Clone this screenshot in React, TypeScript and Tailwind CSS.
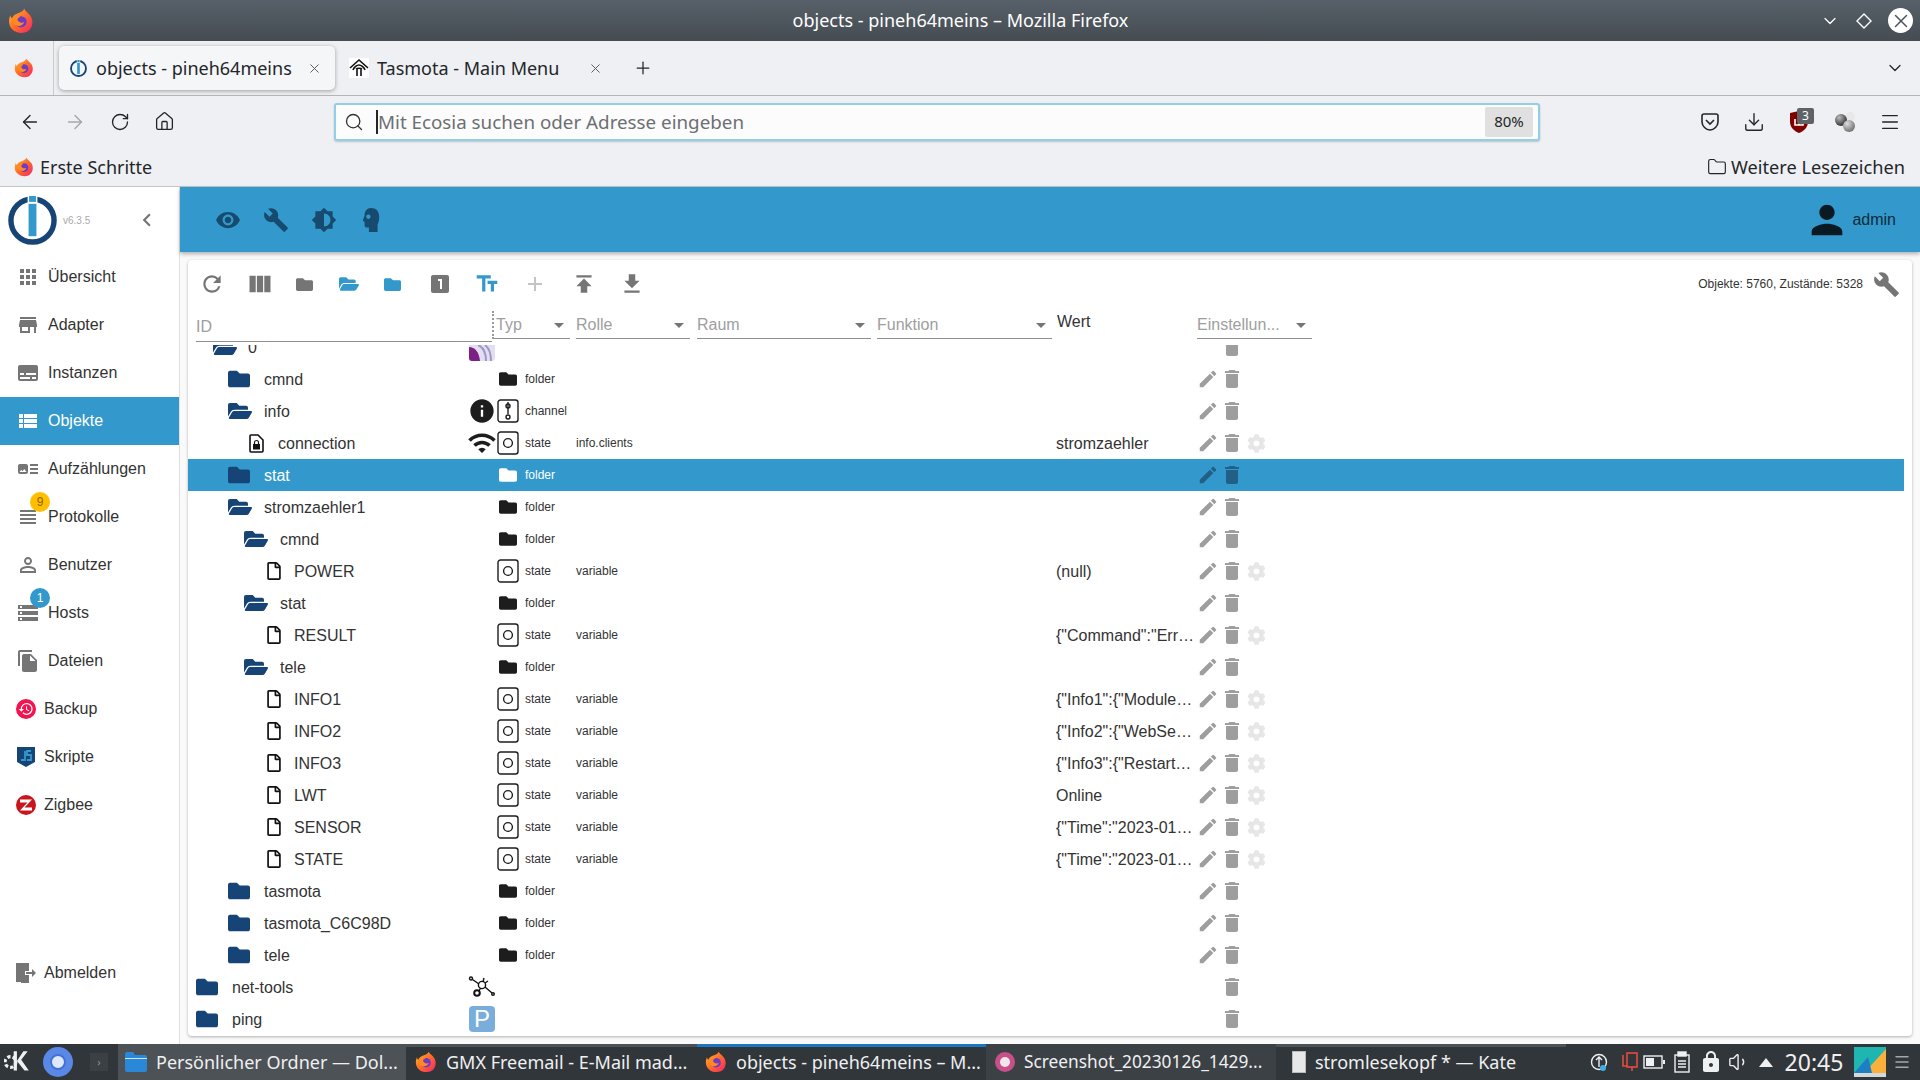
import type { ReactNode } from 'react'
import { FaFolder, FaFolderOpen, FaRegFile, FaCog } from 'react-icons/fa'
import {
  MdApps, MdStore, MdSubtitles, MdViewList, MdArtTrack, MdViewHeadline, MdPersonOutline, MdStorage, MdFileCopy,
  MdRestore, MdRefresh, MdViewColumn, MdLooksOne, MdTextFields, MdAdd, MdPublish, MdGetApp, MdVisibility, MdBuild,
  MdBrightness6, MdPerson, MdEdit, MdDelete, MdChevronLeft, MdArrowDropDown, MdInfo, MdWifi, MdLock,
} from 'react-icons/md'
import {
  ArrowLeft, ArrowRight, RotateCw, Home, Search, X, Plus, ChevronDown, Menu, Download, Folder, Volume1,
} from 'lucide-react'

function Firefox({ size = 24 }: { size?: number }) {
  return (
    <svg width={size} height={size} viewBox="0 0 32 32" className="shrink-0">
      <defs>
        <linearGradient id="ffa" x1="0" y1="0" x2="1" y2="1">
          <stop offset="0" stopColor="#ffbd2e" />
          <stop offset="0.5" stopColor="#ff6a2a" />
          <stop offset="1" stopColor="#f4246b" />
        </linearGradient>
      </defs>
      <path d="M20 1c1 3 5 5 8 9 4 7 2 15-4 19-6 3-14 2-19-3C1 22 0 15 3 9c0 2 1 3 2 4 1-3 3-5 6-6 3-1 7-2 9-6z" fill="url(#ffa)" />
      <circle cx="16" cy="17" r="7" fill="#6c3bc8" />
      <path d="M5 12c3-3 8-3 10-1-2 1-4 2-3 4 1 3 6 4 8 2-1 4-6 7-11 4-3-2-5-6-4-9z" fill="#ff8a1f" />
    </svg>
  )
}

function IoLogo({ size = 50 }: { size?: number }) {
  return (
    <svg width={size} height={size} viewBox="0 0 50 50" className="shrink-0">
      <circle cx="25" cy="25" r="22" fill="none" stroke="#164477" strokeWidth="5.5" />
      <rect x="20" y="0" width="10" height="8" fill="#fff" />
      <rect x="21.5" y="0" width="7" height="6" fill="#3399cc" />
      <rect x="21" y="8" width="8" height="33" fill="#3399cc" />
    </svg>
  )
}

function TasmotaIcon() {
  return (
    <svg width="20" height="20" viewBox="0 0 20 20" className="shrink-0 bg-white" fill="none" stroke="#111" strokeWidth="1.6">
      <path d="M1 10 10 2l9 8" />
      <path d="M4 12c1-3 4-5 6-5s5 2 6 5" />
      <path d="M8 18v-8M12 18v-8M7 11c1-1 5-1 6 0" />
    </svg>
  )
}

function UBlock() {
  return (
    <div className="relative w-[22px] h-[24px]">
      <svg width="18" height="22" viewBox="0 0 18 22" className="mt-[2px]">
        <path d="M9 0 18 2v9c0 5-4 9-9 11-5-2-9-6-9-11V2z" fill="#800000" />
        <path d="M5 8v6h8V8M9 8v6" fill="none" stroke="#fff" strokeWidth="1.6" />
      </svg>
      <span className="absolute -top-[3px] left-[7px] w-[17px] h-[16px] bg-[#5f6368] text-white text-[12px] leading-[16px] text-center rounded-[2px]">3</span>
    </div>
  )
}

function Spheres() {
  return (
    <svg width="22" height="22" viewBox="0 0 22 22">
      <defs>
        <radialGradient id="sph" cx="0.35" cy="0.3" r="0.8">
          <stop offset="0" stopColor="#bbb" />
          <stop offset="1" stopColor="#222" />
        </radialGradient>
        <radialGradient id="sph2" cx="0.35" cy="0.3" r="0.8">
          <stop offset="0" stopColor="#ddd" />
          <stop offset="1" stopColor="#666" />
        </radialGradient>
      </defs>
      <circle cx="16" cy="6" r="5" fill="#e8e8e8" />
      <circle cx="7" cy="9" r="6" fill="url(#sph)" />
      <circle cx="15" cy="15" r="6" fill="url(#sph2)" />
    </svg>
  )
}

function StateBox({ color, kind }: { color: string; kind: 'state' | 'channel' }) {
  return (
    <svg width="22" height="24" viewBox="0 0 22 24" fill="none" stroke={color} strokeWidth="1.4">
      <rect x="1" y="1" width="20" height="22" rx="2.5" />
      {kind === 'state' ? (
        <circle cx="11" cy="12" r="4.4" />
      ) : (
        <>
          <circle cx="11" cy="7" r="2" />
          <circle cx="11" cy="18" r="2" />
          <path d="M11 3v12" />
        </>
      )}
    </svg>
  )
}

function LockFile() {
  return (
    <svg width="15" height="19" viewBox="0 0 15 19">
      <path d="M1 2c0-.6.4-1 1-1h7l5 5v11c0 .6-.4 1-1 1H2c-.6 0-1-.4-1-1z" fill="none" stroke="#111" strokeWidth="1.6" />
      <rect x="4" y="10" width="7" height="5.500" fill="#111" />
      <path d="M5.500 10V8.500a2 2 0 0 1 4 0V10" fill="none" stroke="#111" strokeWidth="1.200" />
    </svg>
  )
}

function HeadIcon() {
  return (
    <svg width="26" height="26" viewBox="0 0 24 24" className="ml-[20px]">
      <path d="M13 1C9 1 7 4 7 8l-1.500 4c0 1 .8 1.500 1.500 1.500V17c0 1 1 2 2 2h2v4h8v-7c1-2 1.500-4 1.500-7 0-5-3-8-7.500-8z" fill="currentColor" />
      <circle cx="10.500" cy="9" r="2" fill="#3399cc" />
    </svg>
  )
}

function NetToolsIcon() {
  return (
    <svg width="28" height="24" viewBox="0 0 28 24" fill="none" stroke="#111" strokeWidth="1.4">
      <circle cx="9" cy="18" r="2.8" strokeWidth="2" />
      <circle cx="14" cy="10" r="3.6" />
      <circle cx="3" cy="3.5" r="1.5" />
      <circle cx="25" cy="19" r="1.3" />
      <path d="M4.5 4.5 11 9M11 16l1.6-3M17 12l7 6M15 7l1-4M17 8l3-2" />
    </svg>
  )
}

function PTile() {
  return (
    <div className="w-[26px] h-[26px] rounded-[4px] bg-[#79aedc] text-white text-[24px] leading-[26px] text-center">P</div>
  )
}

function ArcsIcon() {
  return (
    <svg width="26" height="28" viewBox="0 0 26 28" className="rounded-[3px]">
      <rect width="26" height="28" fill="#e4dff0" />
      <path d="M0 14c6 0 10 5 11 14H0z" fill="#7d1f85" />
      <path d="M9 12c5 2 8 8 8 16M16 12c4 3 6 9 6 16" stroke="#9f97c9" strokeWidth="2" fill="none" />
    </svg>
  )
}

type Row = {
  name: string
  indent: string
  kind: 'closed' | 'open' | 'file' | 'lock'
  aux?: ReactNode
  type?: 'folder' | 'channel' | 'state'
  role?: string
  value?: string
  selected?: boolean
}

const rows: Row[] = [
  { name: 'cmnd', indent: 'pl-[40px]', kind: 'closed', type: 'folder' },
  { name: 'info', indent: 'pl-[40px]', kind: 'open', type: 'channel', aux: <MdInfo size={28} className="text-[#1d1d1d]" /> },
  { name: 'connection', indent: 'pl-[56px]', kind: 'lock', type: 'state', role: 'info.clients', value: 'stromzaehler', aux: <MdWifi size={30} className="text-[#1d1d1d]" /> },
  { name: 'stat', indent: 'pl-[40px]', kind: 'closed', type: 'folder', selected: true },
  { name: 'stromzaehler1', indent: 'pl-[40px]', kind: 'open', type: 'folder' },
  { name: 'cmnd', indent: 'pl-[56px]', kind: 'open', type: 'folder' },
  { name: 'POWER', indent: 'pl-[72px]', kind: 'file', type: 'state', role: 'variable', value: '(null)' },
  { name: 'stat', indent: 'pl-[56px]', kind: 'open', type: 'folder' },
  { name: 'RESULT', indent: 'pl-[72px]', kind: 'file', type: 'state', role: 'variable', value: '{"Command":"Error"}' },
  { name: 'tele', indent: 'pl-[56px]', kind: 'open', type: 'folder' },
  { name: 'INFO1', indent: 'pl-[72px]', kind: 'file', type: 'state', role: 'variable', value: '{"Info1":{"Module":"Tasmota"}}' },
  { name: 'INFO2', indent: 'pl-[72px]', kind: 'file', type: 'state', role: 'variable', value: '{"Info2":{"WebServer":"2"}}' },
  { name: 'INFO3', indent: 'pl-[72px]', kind: 'file', type: 'state', role: 'variable', value: '{"Info3":{"RestartReason":""}}' },
  { name: 'LWT', indent: 'pl-[72px]', kind: 'file', type: 'state', role: 'variable', value: 'Online' },
  { name: 'SENSOR', indent: 'pl-[72px]', kind: 'file', type: 'state', role: 'variable', value: '{"Time":"2023-01-26T20:45"}' },
  { name: 'STATE', indent: 'pl-[72px]', kind: 'file', type: 'state', role: 'variable', value: '{"Time":"2023-01-26T20:45"}' },
  { name: 'tasmota', indent: 'pl-[40px]', kind: 'closed', type: 'folder' },
  { name: 'tasmota_C6C98D', indent: 'pl-[40px]', kind: 'closed', type: 'folder' },
  { name: 'tele', indent: 'pl-[40px]', kind: 'closed', type: 'folder' },
  { name: 'net-tools', indent: 'pl-[8px]', kind: 'closed', aux: <NetToolsIcon /> },
  { name: 'ping', indent: 'pl-[8px]', kind: 'closed', aux: <PTile /> },
]

function TreeRow({ row }: { row: Row }) {
  const s = row.selected
  const actionColor = s ? 'text-[#215f86]' : 'text-[#9e9e9e]'
  return (
    <div className={`flex items-center h-[32px] ${s ? 'bg-[#3399cc] text-white' : 'text-[#333]'}`}>
      <div className={`flex items-center w-[279px] shrink-0 ${row.indent}`}>
        {row.kind === 'closed' && <div className="w-[36px]"><FaFolder size={22} className="text-[#164477]" /></div>}
        {row.kind === 'open' && <div className="w-[36px]"><FaFolderOpen size={24} className="text-[#164477]" /></div>}
        {row.kind === 'file' && <div className="w-[34px] pl-[5px]"><FaRegFile size={18} className="text-[#111]" /></div>}
        {row.kind === 'lock' && <div className="w-[34px] pl-[5px]"><LockFile /></div>}
        <span className="text-[16px] mt-[2px]">{row.name}</span>
      </div>
      <div className="w-[30px] shrink-0 flex justify-center">{row.aux}</div>
      <div className="w-[22px] shrink-0 flex justify-center">
        {row.type === 'folder' && <FaFolder size={18} className={s ? 'text-white' : 'text-[#1d1d1d]'} />}
        {row.type === 'channel' && <StateBox color="#1d1d1d" kind="channel" />}
        {row.type === 'state' && <StateBox color="#1d1d1d" kind="state" />}
      </div>
      <div className="w-[57px] shrink-0 pl-[6px] text-[12px] leading-[14px]">{row.type}</div>
      <div className="w-[480px] shrink-0 text-[12px] leading-[14px]">{row.role}</div>
      <div className="w-[139px] shrink-0 text-[16px] mt-[2px] truncate">{row.value}</div>
      <div className="flex items-center">
        <div className="w-[25px] flex justify-center">
          {row.type && <MdEdit size={22} className={actionColor} />}
        </div>
        <div className="w-[24px] flex justify-center"><MdDelete size={24} className={actionColor} /></div>
        <div className="w-[24px] flex justify-center">
          {row.type === 'state' && <FaCog size={19} className="text-[#e6e6e6]" />}
        </div>
      </div>
    </div>
  )
}

function NavItem({ icon, label, active, left = 'pl-[48px]', badge }: { icon: ReactNode; label: string; active?: boolean; left?: string; badge?: ReactNode }) {
  return (
    <div className={`relative h-[48px] flex items-center text-[16px] ${active ? 'bg-[#3399cc] text-white' : 'text-[#333]'} ${left}`}>
      <div className={`absolute left-[14px] top-[10px] w-[28px] h-[28px] flex items-center justify-center ${active ? 'text-white' : 'text-[#757575]'}`}>{icon}</div>
      {badge}
      {label}
    </div>
  )
}

function Badge({ color, text, dark }: { color: string; text: string; dark?: boolean }) {
  return (
    <span className={`absolute left-[30px] top-[-1px] w-[20px] h-[20px] rounded-full text-[12px] leading-[20px] text-center ${color} ${dark ? 'text-[#8a6500]' : 'text-white'}`}>{text}</span>
  )
}

function FilterHead({ label, w, ml }: { label: string; w: string; ml: string }) {
  return (
    <div className={`h-[28px] flex items-center justify-between border-b border-[#8f8f8f] text-[#9e9e9e] text-[16px] ${w} ${ml}`}>
      <span className="truncate">{label}</span>
      <MdArrowDropDown size={24} className="text-[#757575] shrink-0 -mr-[1px]" />
    </div>
  )
}

function Tool({ children, w }: { children: ReactNode; w: string }) {
  return <div className={`flex items-center justify-center shrink-0 ${w}`}>{children}</div>
}

function Task({ icon, label, cls, top, size = 'text-[18px]' }: { icon: ReactNode; label: string; cls: string; top: string; size?: string }) {
  return (
    <div className={`relative h-full flex items-center gap-[9px] overflow-hidden whitespace-nowrap ${cls}`}>
      <span className={`absolute top-0 left-0 right-0 h-[3px] ${top}`} />
      {icon}
      <span className={`text-[#eff0f1] ${size}`}>{label}</span>
    </div>
  )
}

export default function App() {
  return (
    <div className="w-[1920px] h-[1080px] flex flex-col overflow-hidden bg-white font-['Noto_Sans',sans-serif]">
      {/* window title */}
      <div className="h-[41px] shrink-0 flex items-center bg-gradient-to-b from-[#576069] to-[#454c52] text-white pl-[8px] pr-[7px]">
        <div className="flex-1"><Firefox size={26} /></div>
        <div className="text-[18px]">objects - pineh64meins – Mozilla Firefox</div>
        <div className="flex-1 flex justify-end items-center gap-[15px]">
          <ChevronDown size={20} strokeWidth={1.5} />
          <svg width="18" height="18" viewBox="0 0 18 18" fill="none" stroke="#fff" strokeWidth="1.4"><path d="M9 2l7 7-7 7-7-7z" /></svg>
          <div className="w-[25px] h-[25px] rounded-full bg-white flex items-center justify-center text-[#4d555c]"><X size={22} strokeWidth={1.6} /></div>
        </div>
      </div>

      {/* tabs */}
      <div className="h-[55px] shrink-0 flex items-center bg-[#eff0f3] border-b border-[#b4b5b7] text-[#232629] text-[18px]">
        <div className="w-[54px] h-full flex items-center justify-center pr-[5px] border-r border-[#c9cacc]"><Firefox size={20} /></div>
        <div className="ml-[5px] w-[276px] h-[44px] rounded-[5px] bg-[#f5f6f8] shadow-[0_1px_4px_rgba(0,0,0,0.35)] flex items-center pl-[11px] pr-[13px]">
          <IoLogo size={17} />
          <span className="ml-[9px] flex-1">objects - pineh64meins</span>
          <X size={15} strokeWidth={1.5} className="text-[#555]" />
        </div>
        <div className="ml-[14px] w-[254px] flex items-center">
          <TasmotaIcon />
          <span className="ml-[8px] flex-1">Tasmota - Main Menu</span>
          <X size={15} strokeWidth={1.5} className="text-[#555]" />
        </div>
        <Plus size={20} strokeWidth={1.5} className="ml-[30px]" />
        <ChevronDown size={20} strokeWidth={1.5} className="ml-auto mr-[15px]" />
      </div>

      {/* url bar */}
      <div className="h-[51px] shrink-0 flex items-center bg-[#eff0f3] text-[#232629]">
        <ArrowLeft size={22} strokeWidth={1.5} className="ml-[19px]" />
        <ArrowRight size={22} strokeWidth={1.5} className="ml-[23px] text-[#a5a6a8]" />
        <RotateCw size={20} strokeWidth={1.6} className="ml-[24px]" />
        <Home size={21} strokeWidth={1.5} className="ml-[24px]" />
        <div className="ml-[159px] w-[1206px] h-[38px] rounded-[3px] bg-[#fcfcfc] border-2 border-[#93cee9] flex items-center pl-[8px] pr-[5px] shadow-[0_1px_2px_rgba(0,0,0,0.2)]">
          <Search size={20} strokeWidth={1.6} className="text-[#333]" />
          <span className="ml-[12px] w-[2px] h-[24px] bg-[#232629]" />
          <span className="text-[18.8px] mt-[1px] text-[#6d6f73]">Mit Ecosia suchen oder Adresse eingeben</span>
          <span className="ml-auto w-[48px] h-[30px] rounded-[2px] bg-[#e0e0e0] text-[15px] flex items-center justify-center">80%</span>
        </div>
        <div className="ml-[160px] flex items-center">
          <svg width="20" height="20" viewBox="0 0 20 20" fill="none" stroke="#232629" strokeWidth="1.6"><path d="M2 4c0-1 .7-2 2-2h12c1.300 0 2 1 2 2v6c0 4-4 8-8 8s-8-4-8-8z" /><path d="M6 8l4 4 4-4" /></svg>
          <Download size={22} strokeWidth={1.5} className="ml-[23px]" />
          <div className="ml-[25px]"><UBlock /></div>
          <div className="ml-[22px]"><Spheres /></div>
          <Menu size={22} strokeWidth={1.5} className="ml-[23px]" />
        </div>
      </div>

      {/* bookmarks */}
      <div className="h-[40px] shrink-0 flex items-center bg-[#eff0f3] border-b border-[#c2c3c5] pl-[14px] pr-[15px] text-[#232629] text-[18px]">
        <Firefox size={20} />
        <span className="ml-[6px] mt-[2px]">Erste Schritte</span>
        <Folder size={20} strokeWidth={1.4} className="ml-auto mr-[4px]" />
        <span className="mt-[2px] text-[18.2px]">Weitere Lesezeichen</span>
      </div>

      {/* ioBroker admin */}
      <div className="flex-1 min-h-0 flex font-['Liberation_Sans',sans-serif]">
        <aside className="w-[180px] shrink-0 border-r border-[#e0e0e0] flex flex-col">
          <div className="h-[66px] flex items-center pl-[8px] relative">
            <IoLogo size={49} />
            <span className="ml-[6px] text-[10px] text-[#aaa]">v6.3.5</span>
            <MdChevronLeft size={26} className="absolute left-[134px] top-[20px] text-[#757575]" />
          </div>
          <NavItem icon={<MdApps size={24} />} label="Übersicht" />
          <NavItem icon={<MdStore size={24} />} label="Adapter" />
          <NavItem icon={<MdSubtitles size={24} />} label="Instanzen" />
          <NavItem icon={<MdViewList size={24} />} label="Objekte" active />
          <NavItem icon={<MdArtTrack size={24} />} label="Aufzählungen" />
          <NavItem icon={<MdViewHeadline size={24} />} label="Protokolle" badge={<Badge color="bg-[#ffbf00]" text="9" dark />} />
          <NavItem icon={<MdPersonOutline size={24} />} label="Benutzer" />
          <NavItem icon={<MdStorage size={24} />} label="Hosts" badge={<Badge color="bg-[#3399cc]" text="1" />} />
          <NavItem icon={<MdFileCopy size={24} />} label="Dateien" />
          <NavItem
            left="pl-[44px]"
            label="Backup"
            icon={<div className="-ml-[4px] w-[20px] h-[20px] rounded-full bg-[#f4134f] flex items-center justify-center text-white"><MdRestore size={16} /></div>}
          />
          <NavItem
            left="pl-[44px]"
            label="Skripte"
            icon={
              <svg width="18" height="20" viewBox="0 0 18 20" className="-ml-[4px]">
                <path d="M0 0h18v15l-9 5-9-5z" fill="#164477" />
                <path d="M8 4v9H4M14 4h-4v4h4v5h-4" fill="none" stroke="#3399cc" strokeWidth="1.8" />
              </svg>
            }
          />
          <NavItem
            left="pl-[44px]"
            label="Zigbee"
            icon={
              <svg width="20" height="20" viewBox="0 0 20 20" className="-ml-[4px]">
                <circle cx="10" cy="10" r="10" fill="#c8161d" />
                <path d="M4 4.500h12l-7.500 8H16v3H4l7.500-8H4z" fill="#fff" />
              </svg>
            }
          />
          <div className="mt-auto mb-[47px]">
            <NavItem
              left="pl-[44px]"
              label="Abmelden"
              icon={
                <svg width="20" height="20" viewBox="0 0 20 20" className="-ml-[4px]" fill="#757575">
                  <path d="M0 0h13v8H9v4h4v8H5v-1H0z" />
                  <path d="M10 9h6V6l4 4-4 4v-3h-6z" />
                </svg>
              }
            />
          </div>
        </aside>

        <main className="flex-1 min-w-0 flex flex-col bg-[#fafafa]">
          <header className="h-[65px] shrink-0 bg-[#3399cc] shadow-[0_2px_4px_rgba(0,0,0,0.3)] flex items-center text-[#164a6e] pl-[35px] pr-[24px] relative z-10">
            <MdVisibility size={26} />
            <MdBuild size={26} className="ml-[22px]" />
            <MdBrightness6 size={26} className="ml-[22px]" />
            <HeadIcon />
            <MdPerson size={46} className="ml-auto text-[#0a1a22]" />
            <span className="ml-[2px] text-[16px] text-[#0f2a3a]">admin</span>
          </header>

          <section className="mt-[8px] ml-[8px] mr-[8px] w-[1724px] h-[776px] bg-white rounded-[4px] shadow-[0_1px_3px_rgba(0,0,0,0.3)] flex flex-col overflow-hidden">
            <div className="h-[48px] shrink-0 flex items-center text-[#757575]">
              <Tool w="w-[48px]"><MdRefresh size={26} /></Tool>
              <Tool w="w-[48px]"><MdViewColumn size={28} /></Tool>
              <Tool w="w-[40px]"><FaFolder size={17} /></Tool>
              <Tool w="w-[50px]"><FaFolderOpen size={20} className="text-[#3399cc]" /></Tool>
              <Tool w="w-[36px]"><FaFolder size={17} className="text-[#3399cc]" /></Tool>
              <Tool w="w-[60px]"><MdLooksOne size={24} /></Tool>
              <Tool w="w-[34px]"><MdTextFields size={26} className="text-[#3399cc]" /></Tool>
              <Tool w="w-[62px]"><MdAdd size={24} className="text-[#c4c4c4]" /></Tool>
              <Tool w="w-[36px]"><MdPublish size={26} /></Tool>
              <Tool w="w-[60px]"><MdGetApp size={26} /></Tool>
              <span className="ml-auto text-[12px] text-[#333] mr-[10px]">Objekte: 5760, Zustände: 5328</span>
              <MdBuild size={27} className="mr-[12px]" />
            </div>

            <div className="h-[37px] shrink-0 flex items-start pl-[8px]">
              <div className="w-[296px] h-[34px] flex items-end border-b border-[#8f8f8f] text-[#9e9e9e] text-[16px]"><span className="mb-[2px]">ID</span></div>
              <div className="w-[2px] h-[28px] mt-[3px] border-l-2 border-dotted border-[#999]" />
              <FilterHead label="Typ" w="w-[76px] pl-[2px] mt-[3px]" ml="ml-[0px]" />
              <FilterHead label="Rolle" w="w-[114px] mt-[3px]" ml="ml-[6px]" />
              <FilterHead label="Raum" w="w-[174px] mt-[3px]" ml="ml-[7px]" />
              <FilterHead label="Funktion" w="w-[175px] mt-[3px]" ml="ml-[6px]" />
              <div className="ml-[5px] w-[140px] h-[28px] text-[16px] text-[#333] flex items-center">Wert</div>
              <FilterHead label="Einstellun..." w="w-[115px] mt-[3px]" ml="ml-[0px]" />
            </div>

            <div className="flex-1 min-h-0 overflow-hidden mr-[8px]">
              {/* first row is scrolled half out of view */}
              <div className="-mt-[14px] h-[32px] flex items-center">
                <div className="w-[279px] shrink-0 flex items-center pl-[25px]">
                  <div className="w-[35px]"><FaFolderOpen size={24} className="text-[#164477]" /></div>
                  <span className="text-[16px] mt-[2px] text-[#333]">0</span>
                </div>
                <div className="w-[30px] flex justify-center"><ArcsIcon /></div>
                <div className="ml-[723px] text-[#9e9e9e]"><MdDelete size={24} /></div>
              </div>
              {rows.map((r, i) => <TreeRow key={i} row={r} />)}
            </div>
          </section>
        </main>
      </div>

      {/* plasma panel */}
      <div className="h-[36px] shrink-0 flex items-center bg-[#31363b] text-[#eff0f1]">
        <div className="w-[36px] flex justify-center">
          <svg width="28" height="28" viewBox="0 0 26 26" fill="#eff0f1">
            <path d="M9 3h3v9l6-9h4l-6 8 7 10h-4l-7-9v9H9z" />
            <circle cx="6" cy="13" r="5" fill="none" stroke="#eff0f1" strokeWidth="3" strokeDasharray="3 2" />
          </svg>
        </div>
        <div className="w-[44px] flex justify-center">
          <div className="w-[30px] h-[30px] rounded-full bg-[#5a88e6] flex items-center justify-center">
            <div className="w-[16px] h-[16px] rounded-full bg-[#dfe9fb] border-2 border-[#4272d7]" />
          </div>
        </div>
        <div className="w-[38px] flex justify-center">
          <div className="w-[18px] h-[18px] bg-[#3a4044] text-[#8a9094] text-[11px] leading-[18px] text-center">›</div>
        </div>
        <Task
          cls="w-[288px] pl-[7px] bg-[#4d5257]"
          top="bg-transparent"
          label="Persönlicher Ordner — Dol..."
          icon={
            <svg width="22" height="20" viewBox="0 0 22 20"><path d="M0 2c0-1 1-2 2-2h6l2 3h10c1 0 2 1 2 2v13c0 1-1 2-2 2H2c-1 0-2-1-2-2z" fill="#2b88d8" /><path d="M0 6h22v1H0z" fill="#cde6fa" /></svg>
          }
        />
        <Task cls="w-[291px] pl-[9px]" top="bg-[#4d5257]" label="GMX Freemail - E-Mail mad..." icon={<Firefox size={22} />} />
        <Task cls="w-[289px] pl-[8px]" top="bg-[#1d76c0]" label="objects - pineh64meins – M..." icon={<Firefox size={22} />} />
        <Task
          cls="w-[290px] pl-[9px] bg-[#3c4146]"
          top="bg-transparent"
          size="text-[17.3px]"
          label="Screenshot_20230126_1429..."
          icon={<div className="w-[20px] h-[20px] rounded-full bg-[#c94f8a] flex items-center justify-center"><div className="w-[10px] h-[10px] rounded-full bg-[#f1e5ec]" /></div>}
        />
        <Task
          cls="w-[290px] pl-[16px]"
          top="bg-[#4d5257]"
          label="stromlesekopf * — Kate"
          icon={<div className="w-[14px] h-[22px] bg-[#e8e8e8] border border-[#bbb]" />}
        />
        <div className="ml-[24px] flex items-center text-[#eff0f1]">
          <svg width="18" height="22" viewBox="0 0 18 22" fill="none" stroke="#eff0f1" strokeWidth="1.4"><circle cx="9" cy="11" r="7.500" /><path d="M9 16V7M6 9l3-3 3 3" /><circle cx="13" cy="17" r="3" fill="#3daee9" stroke="none" /></svg>
          <svg width="20" height="22" viewBox="0 0 20 22" fill="none" stroke="#e74c3c" strokeWidth="1.6" className="ml-[13px]"><rect x="6" y="2" width="10" height="14" /><path d="M2 4v11h4M11 16v4" /></svg>
          <svg width="22" height="16" viewBox="0 0 22 16" className="ml-[2px]"><rect x="1" y="2" width="18" height="12" fill="none" stroke="#eff0f1" strokeWidth="1.4" /><rect x="3" y="4" width="8" height="8" fill="#eff0f1" /><rect x="20" y="6" width="2" height="4" fill="#eff0f1" /></svg>
          <svg width="18" height="22" viewBox="0 0 18 22" className="ml-[8px]" fill="none" stroke="#eff0f1" strokeWidth="1.4"><rect x="2" y="4" width="14" height="17" /><rect x="5" y="1" width="8" height="4" fill="#eff0f1" /><path d="M5 10h8M5 13h8M5 16h8" /></svg>
          <MdLock size={24} className="ml-[8px]" />
          <Volume1 size={22} strokeWidth={1.5} className="ml-[5px]" />
          <svg width="14" height="9" viewBox="0 0 14 9" fill="#eff0f1" className="ml-[9px]"><path d="M7 0l7 9H0z" /></svg>
          <span className="ml-[10px] text-[23px] leading-none w-[62px] text-center">20:45</span>
          <svg width="32" height="30" viewBox="0 0 32 30" className="ml-[9px]">
            <rect width="32" height="30" fill="#1fb5b0" />
            <path d="M32 2v24H10z" fill="#fbb03b" />
            <path d="M0 26l14-16 4 16z" fill="#1d7fc1" />
            <rect y="26" width="32" height="4" fill="#d5d8da" />
          </svg>
          <Menu size={18} strokeWidth={2} className="ml-[7px] text-[#a5a8aa]" />
        </div>
      </div>
    </div>
  )
}
